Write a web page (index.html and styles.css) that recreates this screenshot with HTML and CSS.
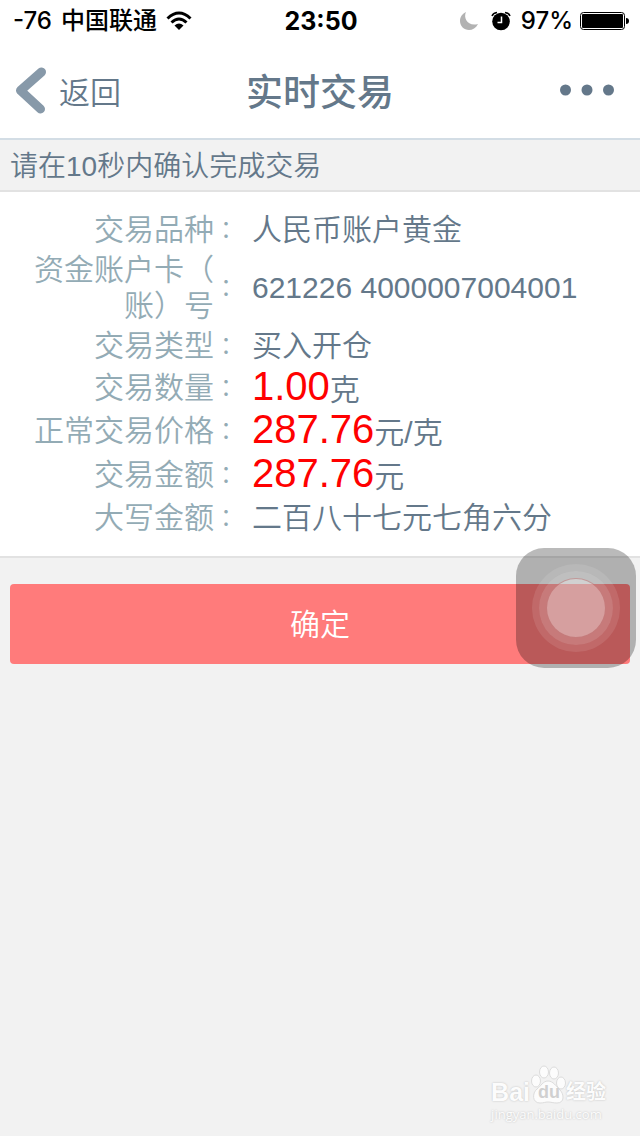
FILE: index.html
```
<!DOCTYPE html>
<html lang="zh-CN">
<head>
  <meta charset="UTF-8">
  <meta name="viewport" content="width=device-width, initial-scale=1.0">
  <title>实时交易</title>
  <link rel="stylesheet" href="styles.css">
</head>
<body>
  <div class="status">
    <div class="status-left">
      <span>-76</span>
      <span>中国联通</span>
      <svg width="26" height="20" viewBox="0 0 26 20">
        <g fill="none" stroke="#000" stroke-width="3">
          <path d="M1.5 7.5 Q13 -3.5 24.5 7.5"/>
          <path d="M5.5 11.5 Q13 4.5 20.5 11.5"/>
        </g>
        <path d="M8.5 14.5 Q13 10.5 17.5 14.5 L13 19 Z"/>
      </svg>
    </div>
    <div class="status-time">23:50</div>
    <div class="status-right">
      <svg width="20" height="20" viewBox="0 0 20 20">
        <path fill="#b2b2b2" d="M7 1 C4 7 9 16 19 13 C17 17 13.5 19 10 19 C5 19 1 15 1 10 C1 6 3.5 2.5 7 1 Z"/>
      </svg>
      <svg class="alarm" width="20" height="20" viewBox="0 0 20 20">
        <circle cx="10" cy="10.5" r="8.8"/>
        <path d="M1 5 Q2 2 6 1.5 M19 5 Q18 2 14 1.5" fill="none" stroke="#000" stroke-width="1.5"/>
        <path d="M10.5 5.5 V11.5 H6.5" fill="none" stroke="#fff" stroke-width="1.5"/>
      </svg>
      <span>97%</span>
      <svg width="50" height="20" viewBox="0 0 50 20">
        <rect x="1.5" y="1.5" width="44" height="17" rx="3" fill="none" stroke="#000"/>
        <rect x="3" y="3" width="41" height="14" rx="1"/>
        <path d="M47 7 Q50 7 50 10 Q50 13 47 13 Z"/>
      </svg>
    </div>
  </div>

  <header class="header">
    <button class="back" type="button">
      <svg width="32" height="48" viewBox="0 0 32 48">
        <path d="M26.5 6 L5.5 24.5 L25.5 43" fill="none" stroke="#8799a9" stroke-width="9" stroke-linecap="round" stroke-linejoin="round"/>
      </svg>
      <span>返回</span>
    </button>
    <h1 class="title">实时交易</h1>
    <button class="more" type="button" aria-label="更多">
      <svg width="54" height="12" viewBox="0 0 54 12" fill="#64788a">
        <circle cx="5.5" cy="6" r="5.5"/>
        <circle cx="27" cy="6" r="5.5"/>
        <circle cx="48.5" cy="6" r="5.5"/>
      </svg>
    </button>
  </header>

  <p class="notice">请在10秒内确认完成交易</p>

  <table class="detail">
    <tbody>
      <tr>
        <th scope="row">交易品种</th>
        <td class="colon">：</td>
        <td>人民币账户黄金</td>
      </tr>
      <tr class="tall">
        <th scope="row">资金账户卡（<br>账）号</th>
        <td class="colon">：</td>
        <td>621226 4000007004001</td>
      </tr>
      <tr>
        <th scope="row">交易类型</th>
        <td class="colon">：</td>
        <td>买入开仓</td>
      </tr>
      <tr>
        <th scope="row">交易数量</th>
        <td class="colon">：</td>
        <td><span class="num">1.00</span>克</td>
      </tr>
      <tr class="price">
        <th scope="row">正常交易价格</th>
        <td class="colon">：</td>
        <td><span class="num">287.76</span>元/克</td>
      </tr>
      <tr class="price">
        <th scope="row">交易金额</th>
        <td class="colon">：</td>
        <td><span class="num">287.76</span>元</td>
      </tr>
      <tr>
        <th scope="row">大写金额</th>
        <td class="colon">：</td>
        <td>二百八十七元七角六分</td>
      </tr>
    </tbody>
  </table>

  <div class="actions">
    <button class="btn" type="button">确定</button>
    <button class="touch" type="button" aria-label="辅助触控"><span class="touch-ring"><span class="touch-dot"></span></span></button>
  </div>

  <footer class="mark">
    <div class="mark-logo">
      <span class="mark-bai">Bai</span>
      <span class="mark-paw">
        <svg width="36" height="40" viewBox="0 0 36 40" fill="#fcfcfc" stroke="#dcdcdc">
          <ellipse cx="6" cy="17" rx="4.5" ry="6"/>
          <ellipse cx="14" cy="8" rx="4.5" ry="6"/>
          <ellipse cx="24" cy="9" rx="4.5" ry="6"/>
          <ellipse cx="31" cy="19" rx="4.5" ry="6"/>
          <path d="M18 17 C13 17 11 22 7 25 C2 29 2 39 10 39 C14 39 15 38 18 38 C21 38 23 39 27 39 C35 39 34 30 30 26 C26 22 23 17 18 17 Z"/>
        </svg>
        <span class="mark-du">du</span>
      </span>
      <span class="mark-cn">经验</span>
    </div>
    <div class="mark-url">jingyan.baidu.com</div>
  </footer>
</body>
</html>
```
FILE: styles.css
```
* {
  box-sizing: border-box;
}
body {
  display: flex;
  flex-direction: column;
  min-height: 100vh;
  margin: 0;
  background-color: #f2f2f2;
  color: #64788a;
  font-family: "Liberation Sans", "Noto Sans CJK SC", sans-serif;
  font-size: 30px;
  font-weight: 350;
}
button {
  padding: 0;
  border: none;
  background: none;
  color: inherit;
  font: inherit;
  cursor: pointer;
}
svg {
  display: block;
}

/* status bar */
.status {
  display: grid;
  grid-template-columns: 1fr auto 1fr;
  align-items: center;
  height: 42px;
  padding: 0 11px 0 13px;
  background-color: #fff;
  color: #000;
  font-family: Inter, "Noto Sans CJK SC", sans-serif;
  font-size: 24px;
  font-weight: 500;
  line-height: 42px;
}
.status-left,
.status-right {
  display: flex;
  align-items: center;
  gap: 9px;
}
.status-right {
  justify-content: flex-end;
  gap: 6px;
}
.alarm {
  margin: 0 4px 0 6px;
}
.status-time {
  font-size: 25px;
  font-weight: 700;
}

/* title bar */
.header {
  display: grid;
  grid-template-columns: 1fr auto 1fr;
  align-items: center;
  height: 98px;
  padding: 0 15px;
  border-bottom: 2px solid #d3dde5;
  background-color: #fff;
}
.back {
  display: flex;
  align-items: center;
  gap: 12px;
  font-size: 31px;
}
.title {
  margin: 0;
  font-size: 37px;
  font-weight: 500;
}
.more {
  justify-self: end;
  margin-right: 11px;
}

.notice {
  height: 52px;
  margin: 0;
  padding: 2px 10px 0;
  border-bottom: 2px solid #e2e2e2;
  font-size: 28px;
  line-height: 50px;
}

/* order details */
.detail {
  display: block;
  padding: 17px 0;
  border-bottom: 2px solid #e2e2e2;
  border-spacing: 0;
  background-color: #fff;
}
.detail tr {
  height: 42px;
}
.detail .tall {
  height: 74px;
}
.detail .price {
  height: 44px;
}
.detail th,
.detail td {
  padding: 0;
  line-height: 36px;
  white-space: nowrap;
}
.detail th {
  width: 214px;
  color: #93abb5;
  font-weight: 350;
  text-align: right;
}
.detail .colon {
  width: 38px;
  padding: 0 14px 2px 0;
  color: #93abb5;
  font-family: "Noto Sans CJK TC", sans-serif;
  font-size: 24px;
  text-align: center;
}
.num {
  color: #f00;
  font-size: 40px;
}

.actions {
  position: relative;
  padding: 26px 10px;
}
.btn {
  display: block;
  width: 100%;
  height: 80px;
  padding-bottom: 4px;
  border-radius: 4px;
  background-color: #ff7b7b;
  color: #fff;
}

/* floating button, overlaps the confirm button */
.touch {
  position: absolute;
  top: -10px;
  right: 4px;
  display: grid;
  place-items: center;
  width: 120px;
  height: 120px;
  border-radius: 28px;
  background-color: rgba(0, 0, 0, 0.27);
}
.touch-ring {
  display: grid;
  place-items: center;
  width: 74px;
  height: 74px;
  border-radius: 50%;
  background-color: rgba(255, 255, 255, 0.2);
  box-shadow: 0 0 0 7px rgba(255, 255, 255, 0.1);
}
.touch-dot {
  width: 60px;
  height: 60px;
  border: 1px solid rgba(170, 70, 70, 0.4);
  border-radius: 50%;
  background-color: rgba(255, 255, 255, 0.28);
}

.mark {
  align-self: flex-end;
  margin: auto 34px 12px 0;
  color: #fcfcfc;
  text-shadow: 0 0 2px #bbb;
}
.mark-logo {
  display: flex;
  align-items: flex-end;
  height: 40px;
  font-size: 25px;
  font-weight: 700;
  line-height: 24px;
}
.mark-paw {
  position: relative;
}
.mark-du {
  position: absolute;
  bottom: 0;
  left: 8px;
  color: #d0d0d0;
  font-size: 18px;
  line-height: 24px;
  text-shadow: none;
}
.mark-cn {
  font-size: 20px;
}
.mark-url {
  font-family: "Open Sans", sans-serif;
  font-size: 13px;
  font-weight: 400;
  line-height: 20px;
}
```
